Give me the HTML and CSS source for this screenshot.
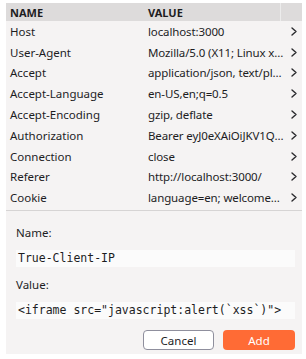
FILE: index.html
```html
<!DOCTYPE html>
<html>
<head>
<meta charset="utf-8">
<link rel="stylesheet" href="styles.css">
</head>
<body>
<div class="panel">
  <div class="table">
    <div class="row head">
      <div class="c-name">NAME</div>
      <div class="c-val">VALUE</div>
      <div class="c-act"></div>
    </div>
    <div class="row"><div class="c-name">Host</div><div class="c-val">localhost:3000</div><div class="c-act"><svg class="chev" width="6" height="9" viewBox="0 0 6 9"><polyline points="1,1 5,4.5 1,8"/></svg></div></div>
    <div class="row"><div class="c-name">User-Agent</div><div class="c-val">Mozilla/5.0 (X11; Linux x86_64; rv:109.0)</div><div class="c-act"><svg class="chev" width="6" height="9" viewBox="0 0 6 9"><polyline points="1,1 5,4.5 1,8"/></svg></div></div>
    <div class="row"><div class="c-name">Accept</div><div class="c-val">application/json, text/plain, */*</div><div class="c-act"><svg class="chev" width="6" height="9" viewBox="0 0 6 9"><polyline points="1,1 5,4.5 1,8"/></svg></div></div>
    <div class="row"><div class="c-name">Accept-Language</div><div class="c-val">en-US,en;q=0.5</div><div class="c-act"><svg class="chev" width="6" height="9" viewBox="0 0 6 9"><polyline points="1,1 5,4.5 1,8"/></svg></div></div>
    <div class="row"><div class="c-name">Accept-Encoding</div><div class="c-val">gzip, deflate</div><div class="c-act"><svg class="chev" width="6" height="9" viewBox="0 0 6 9"><polyline points="1,1 5,4.5 1,8"/></svg></div></div>
    <div class="row"><div class="c-name">Authorization</div><div class="c-val">Bearer eyJ0eXAiOiJKV1QiLCJhbGciOi</div><div class="c-act"><svg class="chev" width="6" height="9" viewBox="0 0 6 9"><polyline points="1,1 5,4.5 1,8"/></svg></div></div>
    <div class="row"><div class="c-name">Connection</div><div class="c-val">close</div><div class="c-act"><svg class="chev" width="6" height="9" viewBox="0 0 6 9"><polyline points="1,1 5,4.5 1,8"/></svg></div></div>
    <div class="row"><div class="c-name">Referer</div><div class="c-val">http://localhost:3000/</div><div class="c-act"><svg class="chev" width="6" height="9" viewBox="0 0 6 9"><polyline points="1,1 5,4.5 1,8"/></svg></div></div>
    <div class="row"><div class="c-name">Cookie</div><div class="c-val">language=en; welcomebanner_status=dismiss</div><div class="c-act"><svg class="chev" width="6" height="9" viewBox="0 0 6 9"><polyline points="1,1 5,4.5 1,8"/></svg></div></div>
  </div>
  <div class="form">
    <label class="lbl">Name:</label>
    <div class="input">True-Client-IP</div>
    <label class="lbl">Value:</label>
    <div class="input">&lt;iframe src="javascript:alert(`xss`)"&gt;</div>
    <div class="actions">
      <button class="btn cancel">Cancel</button>
      <button class="btn add">Add</button>
    </div>
  </div>
</div>
</body>
</html>
```
FILE: styles.css
```css
html, body { margin: 0; padding: 0; background: #ffffff; }
body { font-family: "Noto Sans", "Open Sans", sans-serif; font-size: 11.5px; color: #1d1d1f; }
.panel { margin: 3px 4px 5px 6px; background: #f5f3f3; }
.table { display: flex; flex-direction: column; }
.row { display: grid; grid-template-columns: 138px 141px 17px; height: 20.8px; align-items: center; }
.row.head { grid-template-columns: 138px 136px 22px; height: 18px; background: #dddbdb; font-weight: 700; font-size: 11px; }
.row.head .c-act { border-left: 1px solid #ececec; height: 100%; }
.c-name { padding-left: 4px; white-space: nowrap; overflow: hidden; }
.c-val { padding-left: 4px; white-space: nowrap; overflow: hidden; text-overflow: ellipsis; letter-spacing: -0.12px; }
.row.head .c-val { letter-spacing: 0; }
.c-act { display: flex; justify-content: center; align-items: center; }
.chev { display: block; fill: none; stroke: #2a2a2e; stroke-width: 1.4; stroke-linecap: round; stroke-linejoin: round; }
.form { border-top: 1px solid #d6d4d4; margin-top: 2px; padding: 14px 7px 4px 10px; display: flex; flex-direction: column; }
.lbl { line-height: 16px; }
.input { background: #fbfbfb; font-family: "DejaVu Sans Mono", monospace; font-size: 11.5px; height: 17px; line-height: 17px; padding-left: 2px; margin: 9px 0 10px; white-space: nowrap; overflow: hidden; }
.actions { display: flex; justify-content: flex-end; gap: 9px; margin-top: 1px; }
.btn { font-family: inherit; font-size: 11.5px; height: 20px; border-radius: 4px; padding: 0; }
.cancel { width: 71px; background: #ffffff; border: 1px solid #8f8f9d; color: #1d1d1f; }
.add { width: 72px; background: #ff6b35; border: none; color: #ffffff; }
```
